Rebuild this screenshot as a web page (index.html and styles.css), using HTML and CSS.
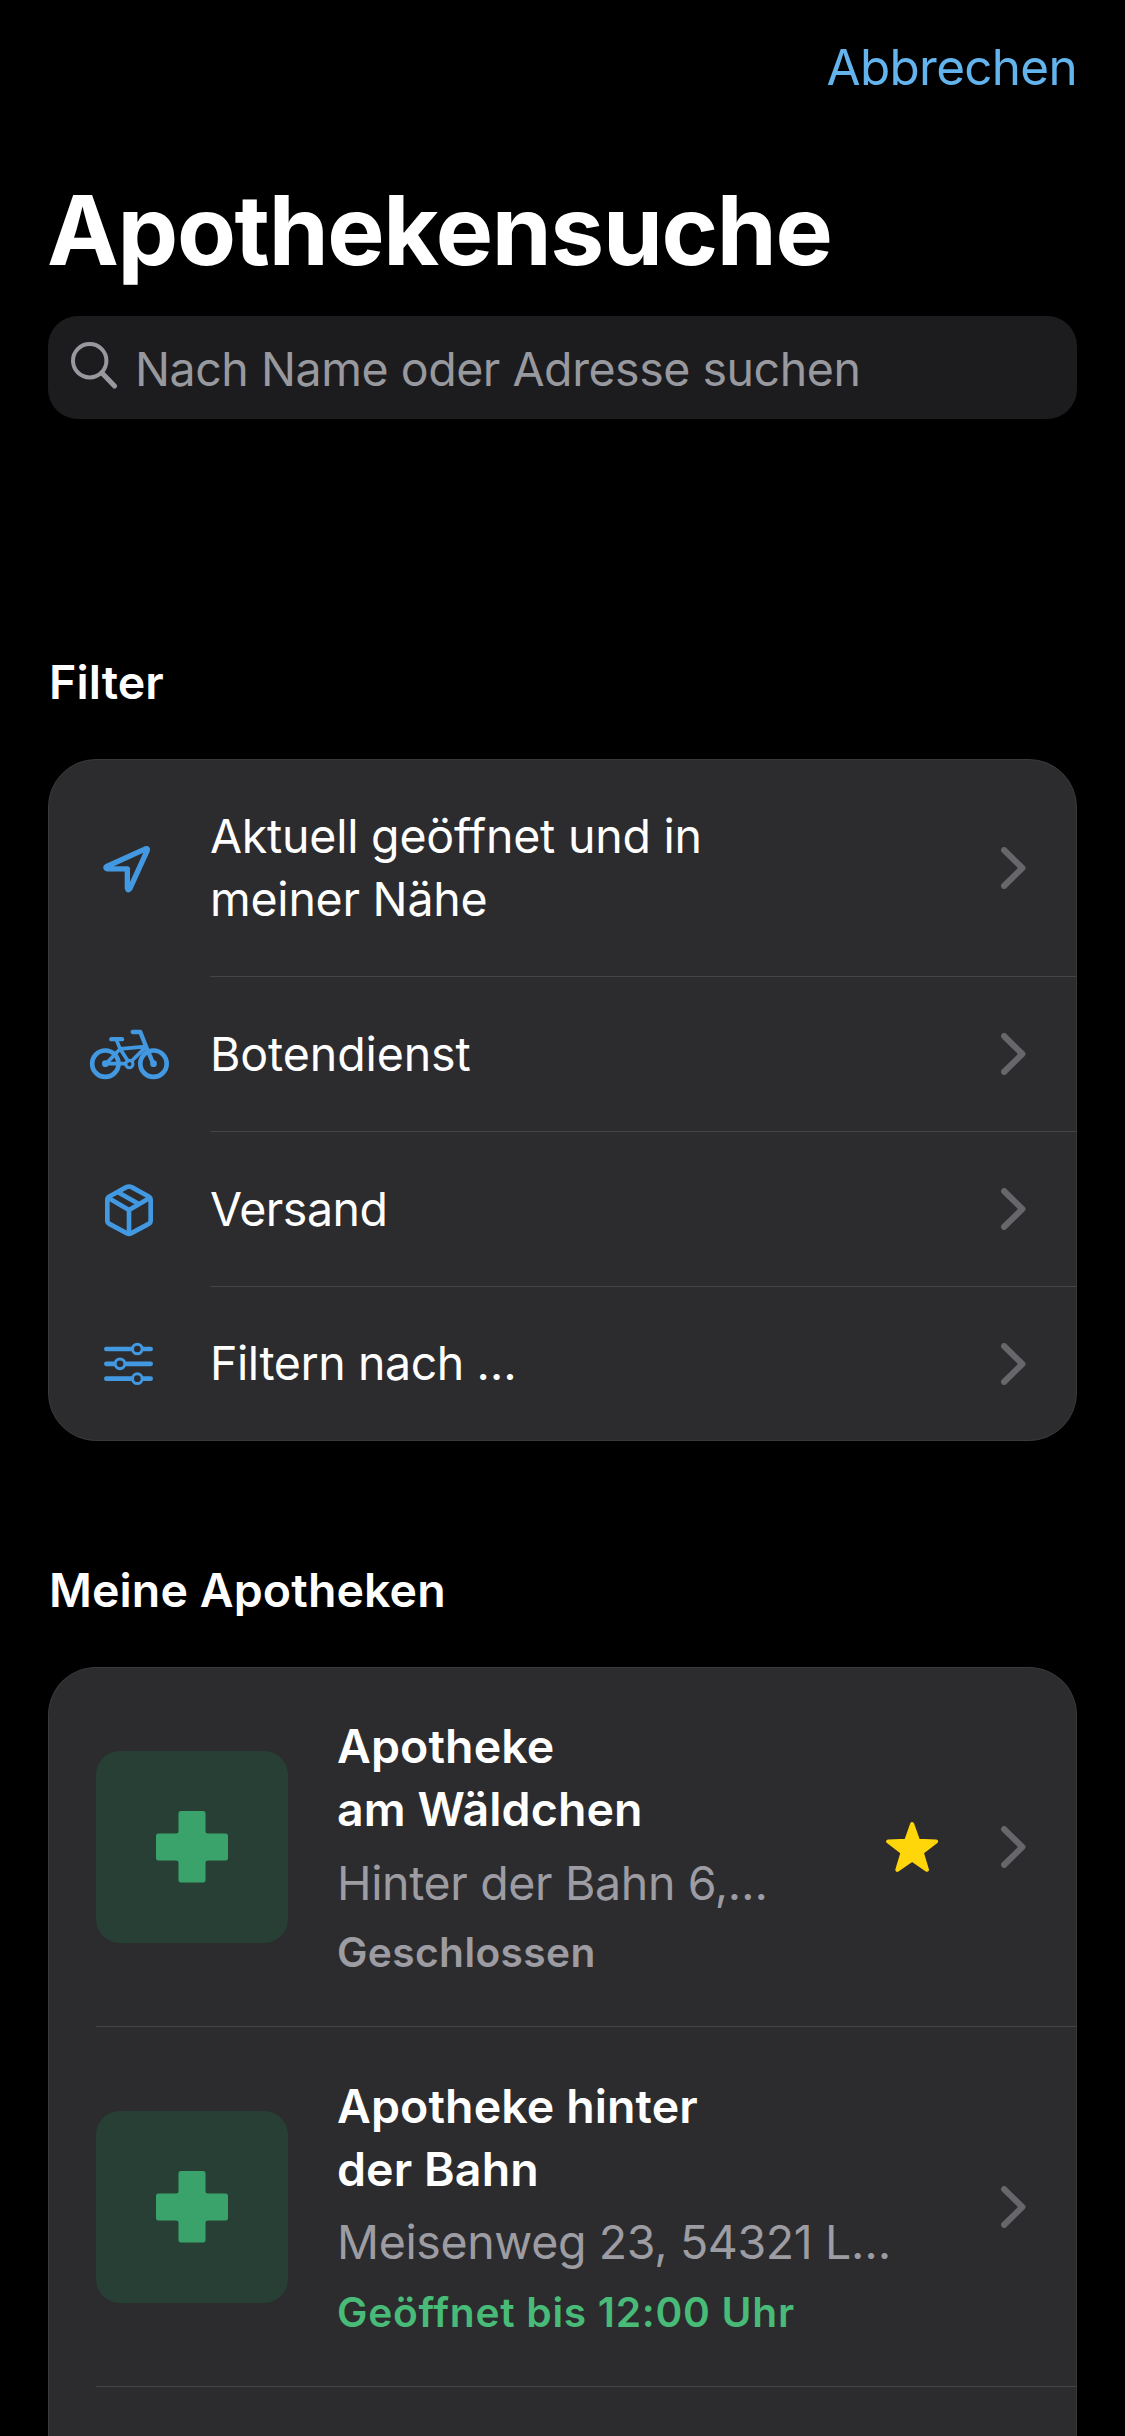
FILE: index.html
```html
<!DOCTYPE html>
<html lang="de">
<head>
<meta charset="utf-8">
<title>Apothekensuche</title>
<link rel="stylesheet" href="styles.css">
</head>
<body>
<svg class="defs" aria-hidden="true">
  <symbol id="chevron" viewBox="0 0 25 42"><path d="M3.2 3.2 21.3 21 3.2 38.8" fill="none" stroke="#67666b" stroke-width="6.2" stroke-linecap="round" stroke-linejoin="round"/></symbol>
  <symbol id="cross" viewBox="0 0 72 72"><path d="M25 0h22q2.500 0 2.500 2.500V20q0 2.500 2.500 2.500h17.500q2.500 0 2.500 2.500v22q0 2.500-2.500 2.500H52q-2.500 0-2.500 2.500v17q0 2.500-2.500 2.500H25q-2.500 0-2.500-2.500V52q0-2.500-2.500-2.500H2.500q-2.500 0-2.500-2.500V25q0-2.500 2.500-2.500H20q2.500 0 2.500-2.500V2.500Q22.500 0 25 0z" fill="#3aa36b"/></symbol>
</svg>
<header class="bar"><a class="cancel">Abbrechen</a></header>
<main class="page">
  <h1 class="title">Apothekensuche</h1>
  <div class="search">
    <svg class="search-icon" viewBox="0 0 47 47"><circle cx="18.700" cy="18.700" r="16.700" fill="none" stroke="#98989f" stroke-width="4"/><path d="M31 31 43.500 44" stroke="#98989f" stroke-width="5" stroke-linecap="round"/></svg>
    <span class="placeholder">Nach Name oder Adresse suchen</span>
  </div>

  <h2 class="section-title">Filter</h2>
  <ul class="card filters">
    <li class="filter tall">
      <svg class="filter-icon" viewBox="0 0 300 290"><path d="M196.500 84.500Q204.500 82 201.500 90L150 203Q144 212 142 202V144.500H82Q74 142 80 137.500Z" fill="none" stroke="#4299e1" stroke-width="16" stroke-linejoin="round"/></svg>
      <div class="filter-body"><span class="label">Aktuell geöffnet und in<br>meiner Nähe</span><svg class="chevron"><use href="#chevron"/></svg></div>
    </li>
    <li class="filter">
      <svg class="filter-icon" viewBox="0 -16 300 300"><g fill="none" stroke="#4299e1" stroke-linecap="round" stroke-linejoin="round"><circle cx="76" cy="160" r="39.500" stroke-width="14"/><circle cx="220.500" cy="160" r="39.500" stroke-width="14"/><circle cx="148" cy="161" r="11" stroke-width="9"/><path d="M94 86.500H126" stroke-width="13"/><path d="M158 65H181L199 111 220 160" stroke-width="13"/><path d="M109 88 121 117 144 152M121 115.500 195 109M196 111 155 152" stroke-width="11"/><path d="M120 116 78 160H137" stroke-width="11"/></g><circle cx="76" cy="160" r="10" fill="#4299e1"/><circle cx="220.500" cy="160" r="10" fill="#4299e1"/></svg>
      <div class="filter-body"><span class="label botendienst">Botendienst</span><svg class="chevron"><use href="#chevron"/></svg></div>
    </li>
    <li class="filter">
      <svg class="filter-icon" viewBox="0 2 300 294"><g fill="none" stroke="#4299e1" stroke-width="14" stroke-linejoin="round"><path d="M139 80.500Q147 76.500 155 80.500L206 108.500Q212 112 212 119V181Q212 187 206 190.500L153 219Q147 222.500 141 219L88 190.500Q82 187 82 181V119Q82 112 88 108.500Z"/><path d="M84 112 147 149 210 112M147 149V220M114 96 178 132"/></g></svg>
      <div class="filter-body"><span class="label versand">Versand</span><svg class="chevron"><use href="#chevron"/></svg></div>
    </li>
    <li class="filter">
      <svg class="filter-icon" viewBox="0 462 300 300"><path d="M79 567H212M79 611.500H212M79 656H212" stroke="#4299e1" stroke-width="14" stroke-linecap="round"/><g fill="#2c2c2e" stroke="#4299e1" stroke-width="9"><circle cx="172" cy="567" r="14.500"/><circle cx="120" cy="611.500" r="14.500"/><circle cx="172" cy="656" r="14.500"/></g></svg>
      <div class="filter-body"><span class="label more">Filtern nach …</span><svg class="chevron"><use href="#chevron"/></svg></div>
    </li>
  </ul>

  <h2 class="section-title second">Meine Apotheken</h2>
  <ul class="card pharmacies">
    <li class="pharmacy">
      <div class="tile"><svg class="cross"><use href="#cross"/></svg></div>
      <div class="info">
        <h3 class="name">Apotheke<br>am Wäldchen</h3>
        <p class="address">Hinter der Bahn 6,…</p>
        <p class="status closed">Geschlossen</p>
      </div>
      <svg class="star" viewBox="0 0 157 150"><path d="M78.500 6 96.500 56.500 150.500 58.500 107.500 91.500 123 143.500 78.500 112.500 34 143.500 49.500 91.500 6.500 58.500 60.500 56.500Z" fill="#ffd60a" stroke="#ffd60a" stroke-width="12" stroke-linejoin="round"/></svg>
      <svg class="chevron"><use href="#chevron"/></svg>
    </li>
    <li class="pharmacy">
      <div class="tile"><svg class="cross"><use href="#cross"/></svg></div>
      <div class="info">
        <h3 class="name">Apotheke hinter<br>der Bahn</h3>
        <p class="address">Meisenweg 23, 54321 L…</p>
        <p class="status open">Geöffnet bis 12:00 Uhr</p>
      </div>
      <svg class="chevron"><use href="#chevron"/></svg>
    </li>
  </ul>
</main>
</body>
</html>
```
FILE: styles.css
```css
* { box-sizing: border-box; margin: 0; padding: 0; }

html, body { height: 2436px; overflow: hidden; }

body {
  background: #000;
  color: #fff;
  font-family: Inter, "Liberation Sans", sans-serif;
  font-size: 46.5px;
  line-height: 63px;
  display: flex;
  flex-direction: column;
}

svg { display: block; flex: none; }
ul { list-style: none; }
.defs { width: 0; height: 0; }

.bar {
  display: flex;
  justify-content: flex-end;
  padding: 37px 48px 0 0;
}

.cancel {
  color: #63b3ed;
  font-size: 49.4px;
  line-height: 60px;
  letter-spacing: -0.67px;
}

.page {
  flex: 1;
  display: flex;
  flex-direction: column;
  padding: 73px 48px 0;
}

.title {
  margin-left: -1px;
  font-size: 96.3px;
  font-weight: 700;
  line-height: 120px;
  letter-spacing: -1.35px;
}

.search {
  display: flex;
  align-items: center;
  gap: 17px;
  height: 103px;
  margin-top: 26px;
  padding-left: 23px;
  border-radius: 30px;
  background: #1c1c1e;
}

.search-icon { width: 47px; height: 47px; margin-bottom: 5px; }

.placeholder {
  color: #98989f;
  letter-spacing: -0.46px;
  padding-top: 3px;
}

.section-title {
  margin: 233px 0 0 1px;
  font-size: 46.5px;
  font-weight: 600;
  line-height: 60px;
  letter-spacing: 0.1px;
}

.section-title.second { margin-top: 119px; }

.card {
  margin-top: 47px;
  border: 1px solid #3a3a3c;
  border-radius: 48px;
  background: #2c2c2e;
}

.filter {
  display: flex;
  align-items: center;
  gap: 30px;
  height: 155px;
  padding-left: 31px;
}

.filter.tall { height: 217px; }
.filter:last-child { height: 153px; }

.filter-icon { width: 100px; height: 100px; }

.filter-body {
  flex: 1;
  align-self: stretch;
  display: flex;
  align-items: center;
  justify-content: space-between;
  padding-right: 50px;
  border-bottom: 1px solid #454548;
}

.filter:last-child .filter-body { border-bottom: 0; }

.label { letter-spacing: -0.24px; }
.label.botendienst { letter-spacing: -0.1px; }
.label.versand { letter-spacing: -0.49px; }
.label.more { letter-spacing: -0.42px; }

.chevron { width: 25px; height: 42px; }

.pharmacies {
  flex: 1;
  border-bottom: 0;
  border-radius: 48px 48px 0 0;
}

.pharmacy {
  display: flex;
  align-items: center;
  height: 359px;
  margin-left: 47px;
  padding-right: 50px;
  border-bottom: 1px solid #454548;
}

.pharmacy + .pharmacy { height: 360px; }

.tile {
  display: flex;
  align-items: center;
  justify-content: center;
  width: 192px;
  height: 192px;
  border-radius: 24px;
  background: #273f35;
}

.cross { width: 72px; height: 72px; }

.info {
  flex: 1;
  display: flex;
  flex-direction: column;
  gap: 10.5px;
  margin-left: 49px;
  padding-top: 2px;
  white-space: nowrap;
}

.name {
  font-size: 46.5px;
  font-weight: 600;
  letter-spacing: 0.1px;
}

.address { color: #9d9ca3; letter-spacing: -0.36px; }

.status {
  font-size: 40.7px;
  font-weight: 600;
  line-height: 56px;
}

.status.closed { color: #9d9ca3; letter-spacing: 0.38px; }
.status.open { color: #48bb78; letter-spacing: 0.72px; }

.star { width: 52.3px; height: 50px; margin-right: 62.5px; }
```
